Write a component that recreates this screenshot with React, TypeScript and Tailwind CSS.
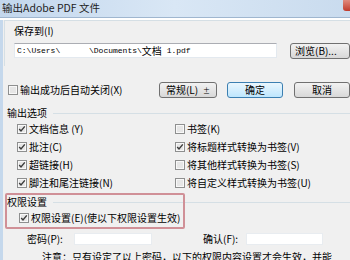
const cjk = { fontFamily: '"Noto Sans CJK SC", "Noto Sans", sans-serif' }

function Box({ checked }: { checked?: boolean }) {
  return (
    <svg width="10" height="10" viewBox="0 0 10 10" className="shrink-0">
      <rect x="0.5" y="0.5" width="9" height="9" fill="#f4f4f4" stroke="#8e8f8f" />
      <rect x="1.5" y="1.5" width="7" height="7" fill="#e6e6e6" stroke="#f8f8f8" />
      {checked && (
        <path d="M2.2 5 L4 7 L7.8 2.4" fill="none" stroke="#3a3a3a" strokeWidth="1.4" />
      )}
    </svg>
  )
}

function Check({ label, checked }: { label: string; checked?: boolean }) {
  return (
    <div className="flex h-[18px] items-center gap-[2px]">
      <Box checked={checked} />
      <span className="leading-[12px]">{label}</span>
    </div>
  )
}

function Btn({ children, w, primary }: { children: React.ReactNode; w: string; primary?: boolean }) {
  return (
    <div
      className={`${w} h-[16px] shrink-0 rounded-[3px] border flex items-center justify-center leading-[12px] ${
        primary
          ? 'border-[#3c7fb1] bg-gradient-to-b from-[#eaf6fd] to-[#bee6fd]'
          : 'border-[#707070] bg-gradient-to-b from-[#f2f2f2] to-[#d8d8d8]'
      }`}
    >
      {children}
    </div>
  )
}

export default function App() {
  return (
    <div className="w-[350px] h-[260px] overflow-hidden text-[10px] text-black" style={cjk}>
      {/* Title bar */}
      <div className="relative h-[18px] bg-gradient-to-r from-[#c3d7ed] via-[#d9e7f5] to-[#c9dbee] border-b border-[#9fb6cf]">
        <span className="absolute left-[2px] top-[1px] text-[10.5px] leading-[14px] text-[#1e1e1e]">
          输出Adobe PDF 文件
        </span>
        <div className="absolute right-0 top-0 w-[7px] h-[11px] rounded-bl-[3px] bg-gradient-to-b from-[#e08a7e] to-[#c0392b]" />
      </div>

      {/* Body */}
      <div className="h-[242px] border-l-[3px] border-[#c5d8ec] bg-[#f0f0f0]">
        {/* Save to group */}
        <div className="mt-[2px] ml-[1px] h-[46px] border-l border-t border-[#d5dfe5]">
          <div className="pl-[9px] pt-[4px] leading-[12px]">保存到(I)</div>
          <div className="mt-[6px] ml-[9px] flex items-start">
            <div className="w-[276px] h-[15px] bg-white border border-[#e3e9ef] border-t-[#abadb3] flex items-center pl-[2px] whitespace-pre">
              <span className="font-mono text-[8px] leading-[12px]" style={{ fontFamily: '"Liberation Mono", monospace' }}>
                {'C:\\Users\\      \\Documents\\'}
              </span>
              <span className="leading-[12px]">文档</span>
              <span className="text-[8px] leading-[12px]" style={{ fontFamily: '"Liberation Mono", monospace' }}>
                {' 1.pdf'}
              </span>
            </div>
            <div className="ml-[13px]">
              <Btn w="w-[60px]">
                <span className="w-full pl-[4px]">浏览(B)...</span>
              </Btn>
            </div>
          </div>
        </div>

        {/* Auto close + buttons */}
        <div className="mt-[16px] flex items-center">
          <div className="w-[177px] pl-[5px] flex items-center gap-[2px]">
            <Box />
            <span className="leading-[12px]">输出成功后自动关闭(X)</span>
          </div>
          <Btn w="w-[58px]">
            <span>常规(L)</span>
            <span className="ml-[5px] text-[7px]">±</span>
          </Btn>
          <div className="ml-[10px]">
            <Btn w="w-[56px]" primary>确定</Btn>
          </div>
          <div className="ml-[11px]">
            <Btn w="w-[56px]">取消</Btn>
          </div>
        </div>

        {/* Output options */}
        <div className="mt-[9px] ml-[4px] flex items-center">
          <span className="leading-[12px]">输出选项</span>
          <div className="ml-[6px] flex-1 h-px bg-[#d5dfe5]" />
        </div>
        <div className="mt-[1px] ml-[14px] flex">
          <div className="w-[158px]">
            <Check label="文档信息 (Y)" checked />
            <Check label="批注(C)" checked />
            <Check label="超链接(H)" checked />
            <Check label="脚注和尾注链接(N)" checked />
          </div>
          <div>
            <Check label="书签(K)" />
            <Check label="将标题样式转换为书签(V)" checked />
            <Check label="将其他样式转换为书签(S)" />
            <Check label="将自定义样式转换为书签(U)" />
          </div>
        </div>

        {/* Permissions */}
        <div className="relative mt-[4px]">
          <div className="absolute left-[2px] top-[-3px] w-[180px] h-[36px] border-2 border-[#d09097] rounded-[2px]" />
          <div className="ml-[4px] flex items-center">
            <span className="leading-[12px]">权限设置</span>
            <div className="ml-[6px] flex-1 h-px bg-[#d5dfe5]" />
          </div>
          <div className="mt-[2px] ml-[16px] flex h-[16px] items-center gap-[2px]">
            <Box checked />
            <span className="leading-[12px]">权限设置(E)(使以下权限设置生效)</span>
          </div>
        </div>

        <div className="mt-[6px] flex h-[14px] items-center">
          <span className="ml-[24px] w-[47px] leading-[12px]">密码(P):</span>
          <div className="w-[78px] h-[12px] bg-white border border-[#e8ecf0]" />
          <span className="ml-[51px] w-[43px] leading-[12px]">确认(F):</span>
          <div className="w-[77px] h-[12px] bg-white border border-[#e8ecf0]" />
        </div>

        <div className="mt-[5px] ml-[39px] whitespace-nowrap leading-[12px]">
          注意：只有设定了以上密码，以下的权限内容设置才会生效，并能
        </div>
      </div>
    </div>
  )
}
